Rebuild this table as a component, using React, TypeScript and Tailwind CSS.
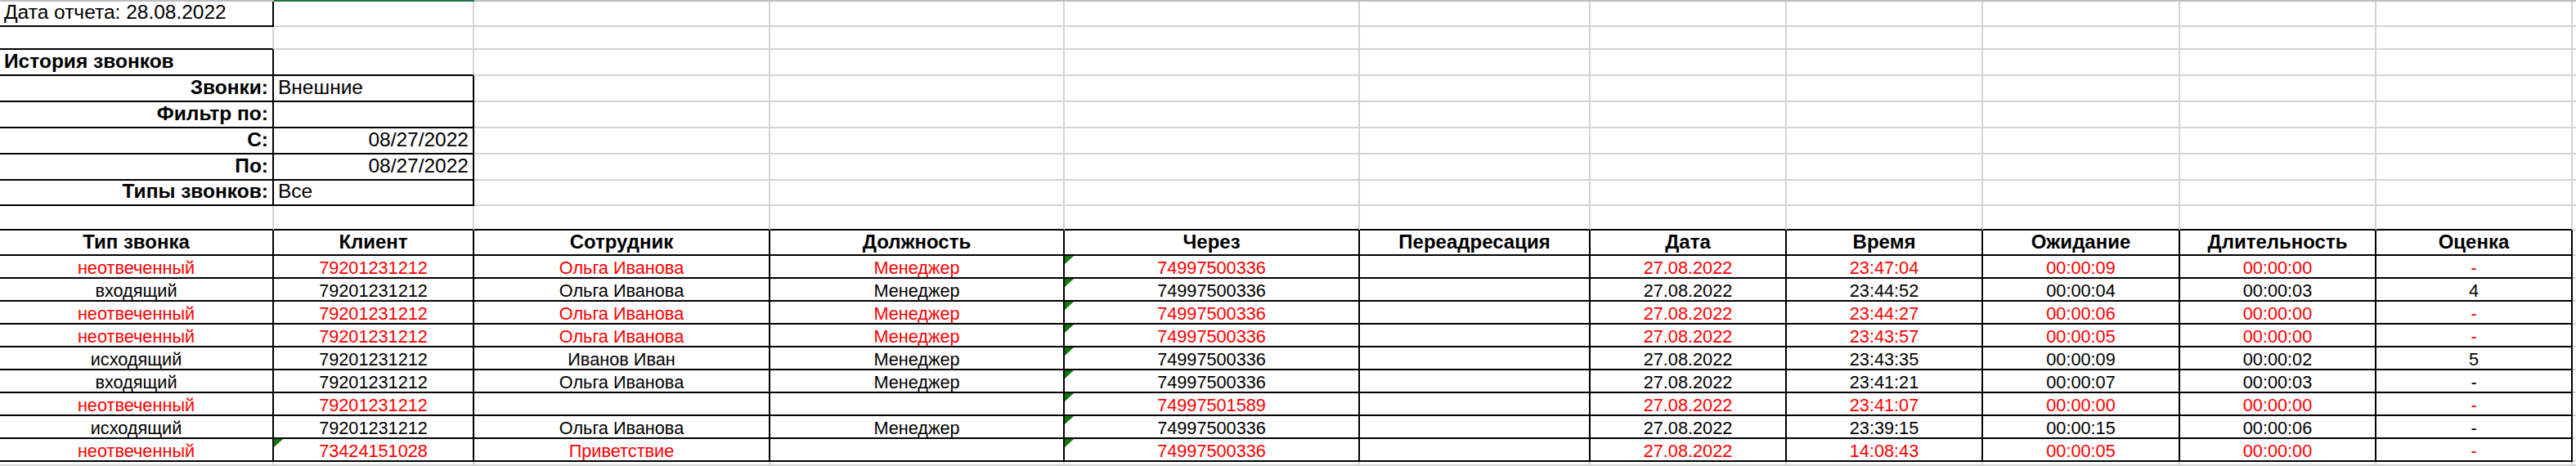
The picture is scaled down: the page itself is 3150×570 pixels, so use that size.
import React from 'react';

type Align = 'left' | 'center' | 'right';

interface Cell {
  text?: string;
  align?: Align;
  bold?: boolean;
  red?: boolean;
  mark?: boolean;
}

// column widths of the sheet, the last one takes what is left
const colWidths = [
  'w-[335px]',
  'w-[245px]',
  'w-[362px]',
  'w-[360px]',
  'w-[361px]',
  'w-[282px]',
  'w-[240px]',
  'w-[240px]',
  'w-[241px]',
  'w-[240px]',
  'w-[240px]',
];

const rowHeights = [
  'h-[31px]',
  'h-[28px]',
  'h-[32px]',
  'h-[32px]',
  'h-[32px]',
  'h-[32px]',
  'h-[32px]',
  'h-[31px]',
  'h-[30px]',
  'h-[31px]',
  'h-[28px]',
  'h-[28px]',
  'h-[28px]',
  'h-[28px]',
  'h-[28px]',
  'h-[28px]',
  'h-[28px]',
  'h-[28px]',
  'h-[28px]',
  'h-[5px]',
];

const headers = [
  'Тип звонка',
  'Клиент',
  'Сотрудник',
  'Должность',
  'Через',
  'Переадресация',
  'Дата',
  'Время',
  'Ожидание',
  'Длительность',
  'Оценка',
];

const calls = [
  ['неотвеченный', '79201231212', 'Ольга Иванова', 'Менеджер', '74997500336', '', '27.08.2022', '23:47:04', '00:00:09', '00:00:00', '-'],
  ['входящий', '79201231212', 'Ольга Иванова', 'Менеджер', '74997500336', '', '27.08.2022', '23:44:52', '00:00:04', '00:00:03', '4'],
  ['неотвеченный', '79201231212', 'Ольга Иванова', 'Менеджер', '74997500336', '', '27.08.2022', '23:44:27', '00:00:06', '00:00:00', '-'],
  ['неотвеченный', '79201231212', 'Ольга Иванова', 'Менеджер', '74997500336', '', '27.08.2022', '23:43:57', '00:00:05', '00:00:00', '-'],
  ['исходящий', '79201231212', 'Иванов Иван', 'Менеджер', '74997500336', '', '27.08.2022', '23:43:35', '00:00:09', '00:00:02', '5'],
  ['входящий', '79201231212', 'Ольга Иванова', 'Менеджер', '74997500336', '', '27.08.2022', '23:41:21', '00:00:07', '00:00:03', '-'],
  ['неотвеченный', '79201231212', '', '', '74997501589', '', '27.08.2022', '23:41:07', '00:00:00', '00:00:00', '-'],
  ['исходящий', '79201231212', 'Ольга Иванова', 'Менеджер', '74997500336', '', '27.08.2022', '23:39:15', '00:00:15', '00:00:06', '-'],
  ['неотвеченный', '73424151028', 'Приветствие', '', '74997500336', '', '27.08.2022', '14:08:43', '00:00:05', '00:00:00', '-'],
];

const filters: [string, string, Align][] = [
  ['Звонки:', 'Внешние', 'left'],
  ['Фильтр по:', '', 'left'],
  ['С:', '08/27/2022', 'right'],
  ['По:', '08/27/2022', 'right'],
  ['Типы звонков:', 'Все', 'left'],
];

function buildRows(): Cell[][] {
  const rows: Cell[][] = [];
  rows.push([{ text: 'Дата отчета: 28.08.2022' }]);
  rows.push([]);
  rows.push([{ text: 'История звонков', bold: true }]);
  filters.forEach(([label, value, align]) => {
    rows.push([
      { text: label, bold: true, align: 'right' },
      { text: value, align },
    ]);
  });
  rows.push([]);
  rows.push(headers.map((h) => ({ text: h, bold: true, align: 'center' as Align })));
  calls.forEach((call) => {
    const red = call[0] === 'неотвеченный';
    rows.push(
      call.map((text, c) => ({
        text,
        red,
        align: 'center' as Align,
        mark: c === 4 || (c === 1 && text === '73424151028'),
      }))
    );
  });
  rows.push([]);
  return rows;
}

// cells framed with a black border
function boxed(r: number, c: number) {
  if (c < 0 || c > 10) return false;
  if (r === 0 || r === 2) return c === 0;
  if (r >= 3 && r <= 7) return c <= 1;
  if (r >= 9 && r <= 18) return true;
  return false;
}

function Triangle() {
  return (
    <svg className="absolute left-0 top-0" width="11" height="10" viewBox="0 0 11 10">
      <polygon points="0,0 11,0 0,10" fill="#0b7a0b" />
    </svg>
  );
}

export default function App() {
  const rows = buildRows();

  return (
    <div className="w-[3150px] h-[570px] overflow-hidden bg-white text-black font-['Liberation_Sans',Arial,sans-serif]">
      {/* sheet header edge */}
      <div className="flex h-[2px]">
        <div className="w-[335px] bg-[#bdbdbd]" />
        <div className="w-[245px] bg-[#217346]" />
        <div className="flex-1 bg-[#bdbdbd]" />
      </div>

      {rows.map((cells, r) => {
        const top = r <= 8;
        const header = r === 9;
        return (
          <div key={r} className={`flex ${rowHeights[r]}`}>
            {colWidths.map((w, c) => {
              const cell = cells[c] || {};
              const rightBlack = boxed(r, c) || boxed(r, c + 1);
              const bottomBlack = boxed(r, c) || boxed(r + 1, c);
              const align =
                cell.align === 'center'
                  ? 'justify-center'
                  : cell.align === 'right'
                  ? 'justify-end pr-[5px]'
                  : 'justify-start pl-[5px]';
              const size = top
                ? 'text-[24.5px] leading-[24px] pb-[4px]'
                : header
                ? 'text-[24px] leading-[24px] pb-[3px]'
                : 'text-[21.7px] leading-[21px] pb-[1px]';
              return (
                <div
                  key={c}
                  className={`relative flex shrink-0 items-end overflow-hidden whitespace-nowrap border-r-2 border-b-2 ${w} ${
                    rightBlack ? 'border-r-black' : 'border-r-[#d4d4d4]'
                  } ${bottomBlack ? 'border-b-black' : 'border-b-[#d4d4d4]'} ${align} ${size} ${
                    cell.bold ? 'font-bold' : ''
                  } ${cell.red ? 'text-[#ff0000]' : ''}`}
                >
                  {cell.mark && <Triangle />}
                  {cell.text}
                </div>
              );
            })}
            <div className="flex-1 border-b-2 border-b-[#d4d4d4]" />
          </div>
        );
      })}
    </div>
  );
}
